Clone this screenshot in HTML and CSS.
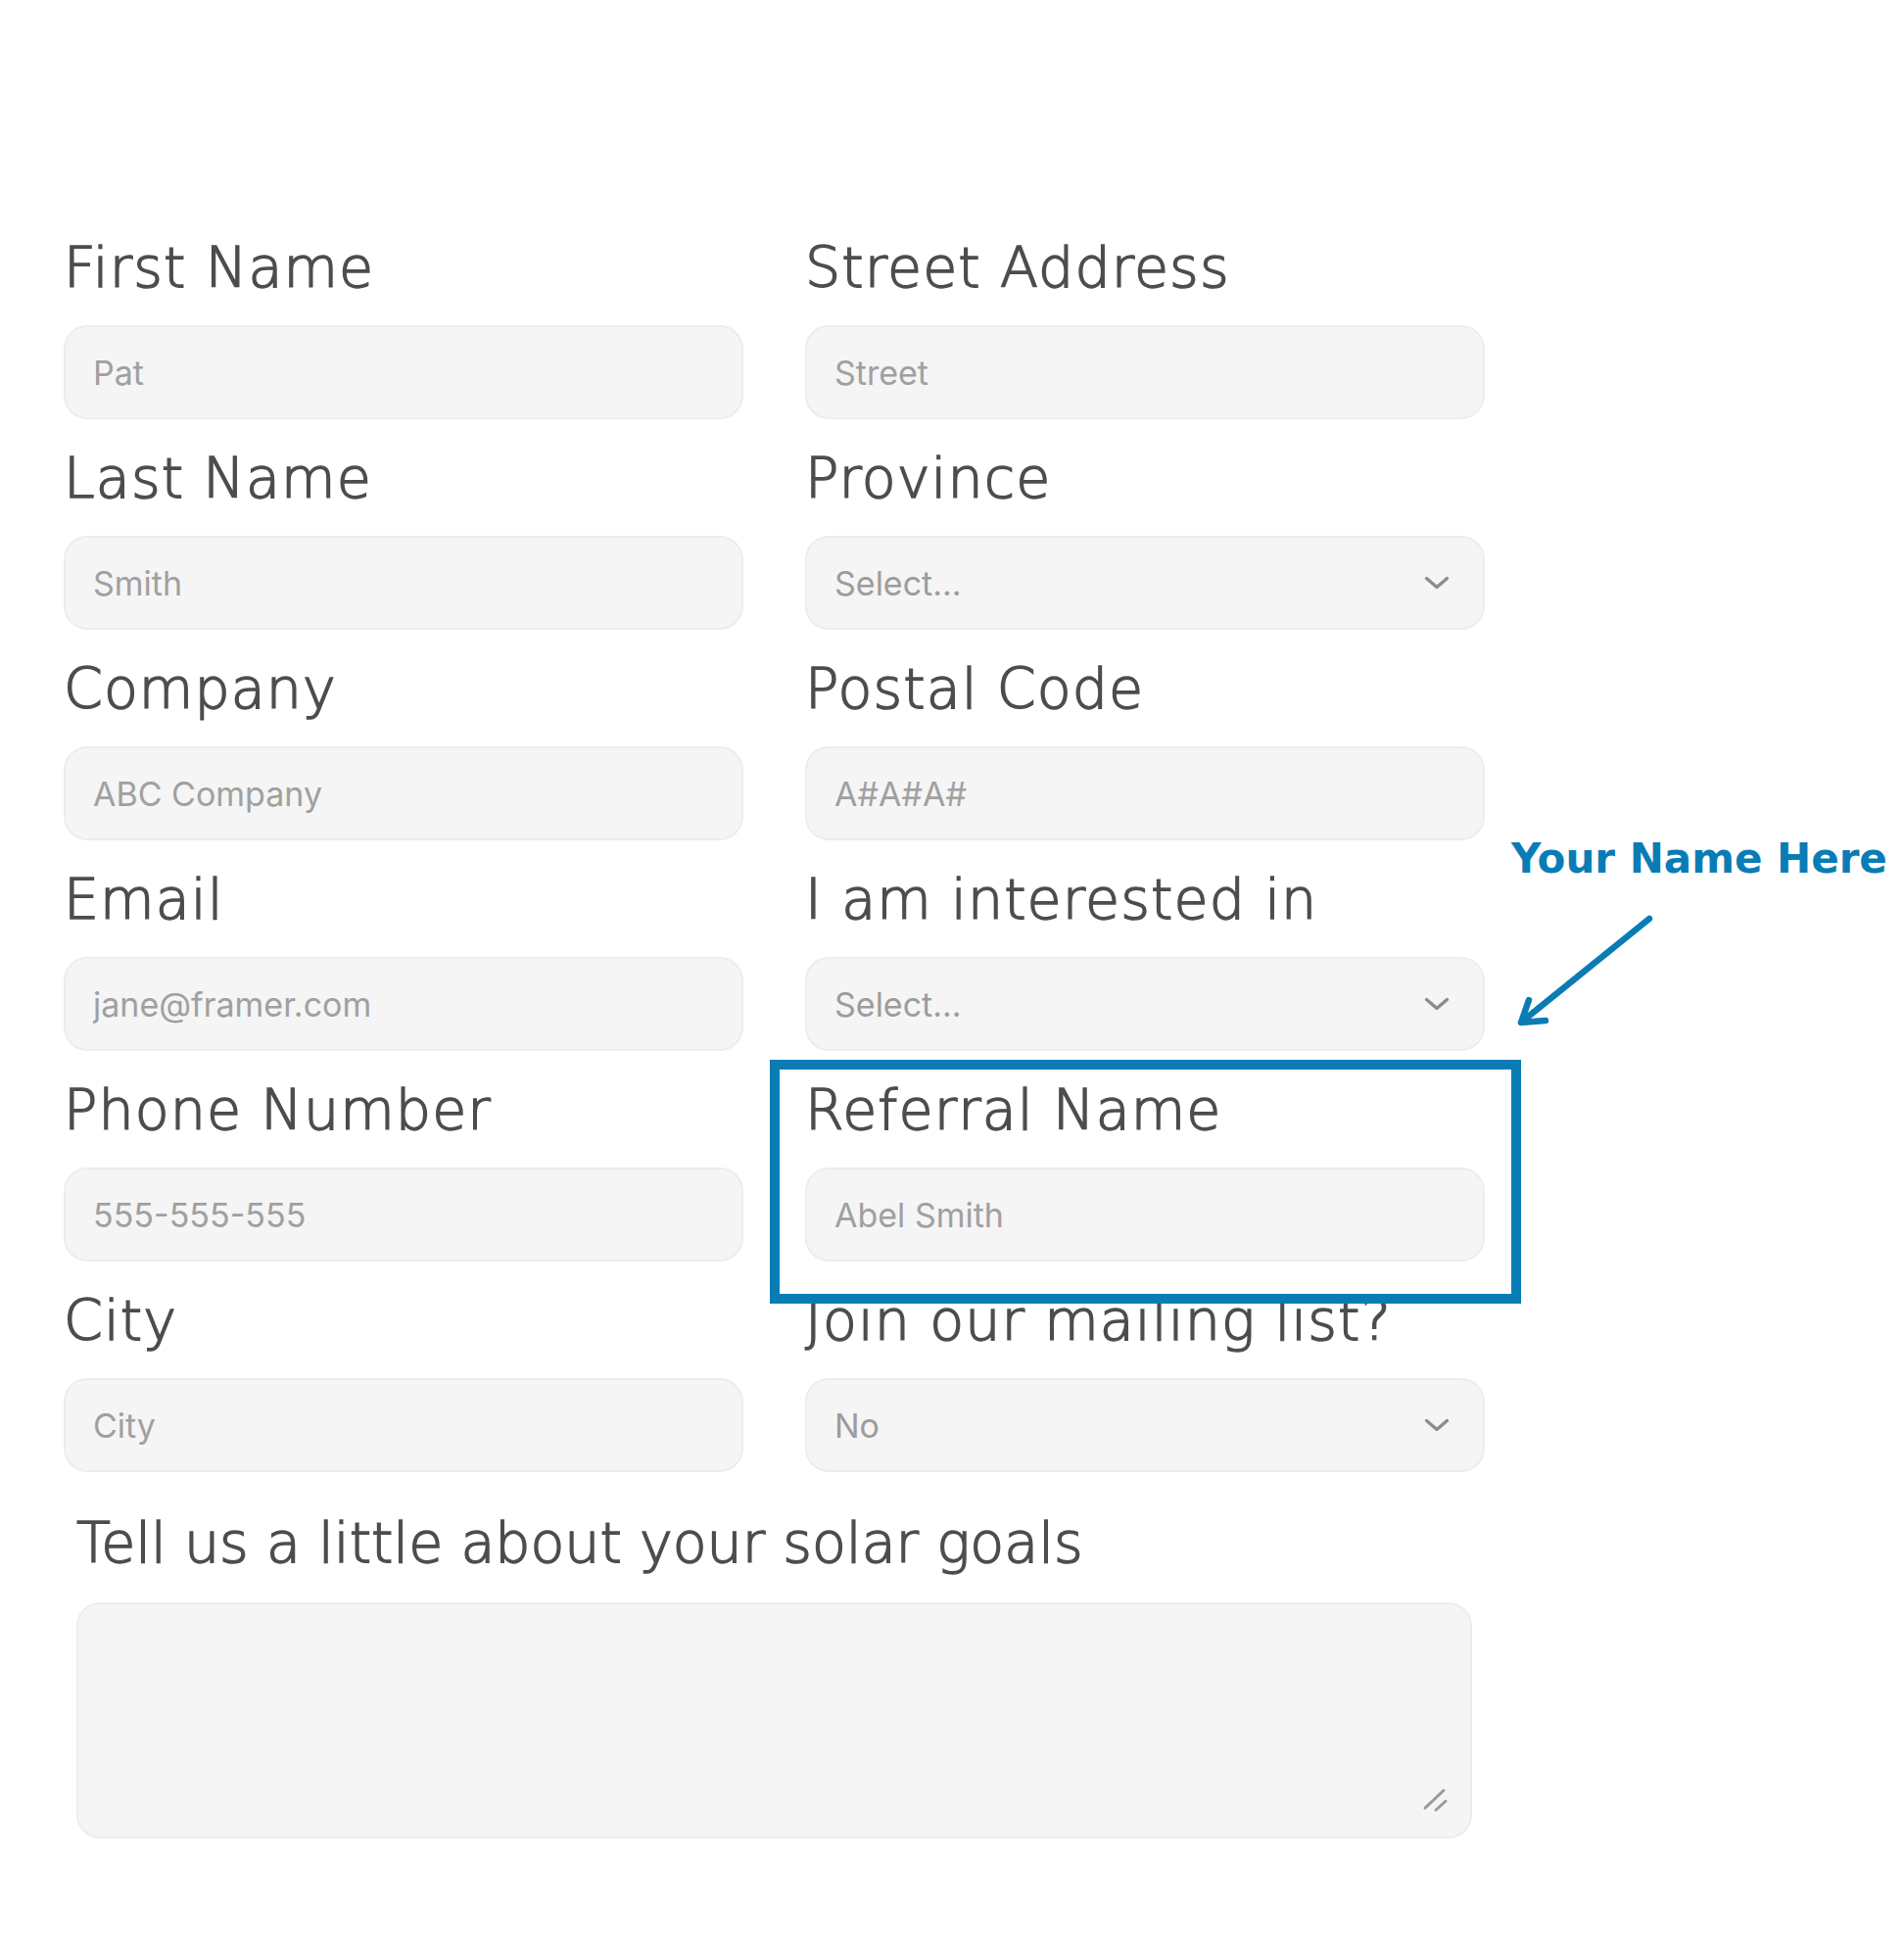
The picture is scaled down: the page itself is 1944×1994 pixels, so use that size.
FILE: index.html
```html
<!DOCTYPE html>
<html lang="en">
<head>
<meta charset="utf-8">
<title>Solar Contact Form</title>
<link rel="stylesheet" href="styles.css">
</head>
<body>
<main class="page">
  <form class="grid">
    <div class="field">
      <label class="label">First Name</label>
      <input class="control" type="text" placeholder="Pat">
    </div>
    <div class="field">
      <label class="label">Street Address</label>
      <input class="control" type="text" placeholder="Street">
    </div>
    <div class="field">
      <label class="label">Last Name</label>
      <input class="control" type="text" placeholder="Smith">
    </div>
    <div class="field">
      <label class="label">Province</label>
      <div class="select-wrap">
        <select class="control select"><option>Select...</option></select>
        <svg class="chevron" viewBox="0 0 26 14"><path d="M2.5 2.5 L13 11.5 L23.5 2.5" fill="none" stroke="#8c8c8c" stroke-width="3.4" stroke-linecap="round" stroke-linejoin="round"/></svg>
      </div>
    </div>
    <div class="field">
      <label class="label">Company</label>
      <input class="control" type="text" placeholder="ABC Company">
    </div>
    <div class="field">
      <label class="label">Postal Code</label>
      <input class="control" type="text" placeholder="A#A#A#">
    </div>
    <div class="field">
      <label class="label">Email</label>
      <input class="control" type="email" placeholder="jane@framer.com">
    </div>
    <div class="field">
      <label class="label">I am interested in</label>
      <div class="select-wrap">
        <select class="control select"><option>Select...</option></select>
        <svg class="chevron" viewBox="0 0 26 14"><path d="M2.5 2.5 L13 11.5 L23.5 2.5" fill="none" stroke="#8c8c8c" stroke-width="3.4" stroke-linecap="round" stroke-linejoin="round"/></svg>
      </div>
    </div>
    <div class="field">
      <label class="label">Phone Number</label>
      <input class="control" type="tel" placeholder="555-555-555">
    </div>
    <div class="field field--highlight">
      <label class="label">Referral Name</label>
      <input class="control" type="text" placeholder="Abel Smith">
    </div>
    <div class="field">
      <label class="label">City</label>
      <input class="control" type="text" placeholder="City">
    </div>
    <div class="field">
      <label class="label">Join our mailing list?</label>
      <div class="select-wrap">
        <select class="control select"><option>No</option><option>Yes</option></select>
        <svg class="chevron" viewBox="0 0 26 14"><path d="M2.5 2.5 L13 11.5 L23.5 2.5" fill="none" stroke="#8c8c8c" stroke-width="3.4" stroke-linecap="round" stroke-linejoin="round"/></svg>
      </div>
    </div>
  </form>

  <div class="message">
    <label class="label label--wide">Tell us a little about your solar goals</label>
    <div class="textarea-wrap">
      <textarea class="control textarea"></textarea>
      <svg class="resize" viewBox="0 0 32 32"><path d="M5 24 L24 6 M16 26 L26 17" fill="none" stroke="#999" stroke-width="3" stroke-linecap="round"/></svg>
    </div>
  </div>

  <span class="annotation-text">Your Name Here</span>
  <svg class="annotation-arrow" viewBox="0 0 160 130">
    <path d="M144 13 L14 118" fill="none" stroke="#0a7cb5" stroke-width="6.5" stroke-linecap="round"/>
    <path d="M21 96 L13 119 L38 117" fill="none" stroke="#0a7cb5" stroke-width="6.5" stroke-linecap="round" stroke-linejoin="round"/>
  </svg>
</main>
</body>
</html>
```
FILE: styles.css
```css
* {
  box-sizing: border-box;
}

html, body {
  margin: 0;
  background: #ffffff;
}

body {
  font-family: "Inter", "Liberation Sans", sans-serif;
}

.page {
  position: relative;
  min-height: 1994px;
  padding: 240px 0 80px 65px;
}

.grid {
  display: grid;
  grid-template-columns: 694px 694px;
  column-gap: 63px;
  row-gap: 27px;
  margin: 0;
}

.field {
  position: relative;
  display: flex;
  flex-direction: column;
  gap: 26px;
}

.label {
  display: block;
  font-family: "DejaVu Sans", "Liberation Sans", sans-serif;
  font-weight: 300;
  font-size: 57px;
  line-height: 66px;
  letter-spacing: 1.1px;
  color: #4d4d4d;
  -webkit-text-stroke: 1.5px #4d4d4d;
  white-space: nowrap;
}

.label--wide {
  letter-spacing: 0;
}

.control {
  display: block;
  width: 100%;
  height: 96px;
  margin: 0;
  padding: 0 28px;
  background: #f5f5f5;
  border: 2px solid #ededed;
  border-radius: 24px;
  font-family: "Inter", "Liberation Sans", sans-serif;
  font-size: 34px;
  color: #9c9c9c;
  outline: none;
}

.control::placeholder {
  color: #a0a0a0;
  opacity: 1;
}

.select-wrap {
  position: relative;
}

.select {
  appearance: none;
  -webkit-appearance: none;
  color: #9c9c9c;
}

.chevron {
  position: absolute;
  right: 36px;
  top: 41px;
  width: 26px;
  height: 14px;
  pointer-events: none;
}

.field--highlight::after {
  content: "";
  position: absolute;
  top: -18px;
  left: -36px;
  right: -37px;
  bottom: -43px;
  border: 10px solid #0a7cb5;
  z-index: 2;
  pointer-events: none;
}

.message {
  display: flex;
  flex-direction: column;
  gap: 28px;
  width: 1425px;
  margin: 39px 0 0 13px;
}

.textarea-wrap {
  position: relative;
}

.textarea {
  height: 241px;
  padding: 28px;
  resize: none;
}

.resize {
  position: absolute;
  left: 1372px;
  top: 186px;
  width: 32px;
  height: 32px;
  pointer-events: none;
}

.annotation-text {
  position: absolute;
  left: 1543px;
  top: 852px;
  font-family: "DejaVu Sans", "Liberation Sans", sans-serif;
  font-weight: 700;
  font-size: 42px;
  line-height: 50px;
  color: #0a7cb5;
  white-space: nowrap;
}

.annotation-arrow {
  position: absolute;
  left: 1540px;
  top: 925px;
  width: 160px;
  height: 130px;
}
```
